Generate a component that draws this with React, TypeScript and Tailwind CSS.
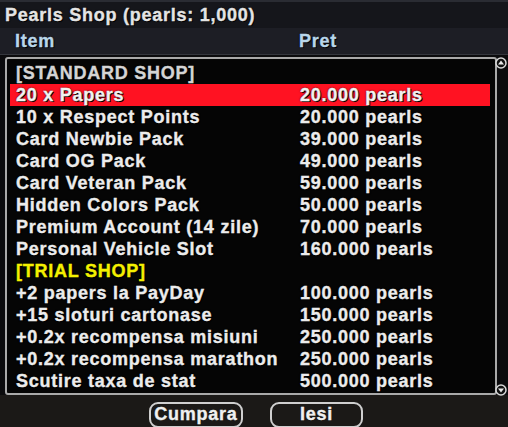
import React from "react";

type Row = { name: string; price?: string; kind?: "header" | "trial" | "selected" };

const rows: Row[] = [
  { name: "[STANDARD SHOP]", kind: "header" },
  { name: "20 x Papers", price: "20.000 pearls", kind: "selected" },
  { name: "10 x Respect Points", price: "20.000 pearls" },
  { name: "Card Newbie Pack", price: "39.000 pearls" },
  { name: "Card OG Pack", price: "49.000 pearls" },
  { name: "Card Veteran Pack", price: "59.000 pearls" },
  { name: "Hidden Colors Pack", price: "50.000 pearls" },
  { name: "Premium Account (14 zile)", price: "70.000 pearls" },
  { name: "Personal Vehicle Slot", price: "160.000 pearls" },
  { name: "[TRIAL SHOP]", kind: "trial" },
  { name: "+2 papers la PayDay", price: "100.000 pearls" },
  { name: "+15 sloturi cartonase", price: "150.000 pearls" },
  { name: "+0.2x recompensa misiuni", price: "250.000 pearls" },
  { name: "+0.2x recompensa marathon", price: "250.000 pearls" },
  { name: "Scutire taxa de stat", price: "500.000 pearls" },
];

function ScrollArrow({ down }: { down?: boolean }) {
  return (
    <svg width="12" height="12" viewBox="0 0 12 12">
      <circle cx="6" cy="6" r="5" fill="#111" stroke="#d8d8d8" strokeWidth="1.5" />
      <path d={down ? "M3 4.5 L9 4.5 L6 8.5 Z" : "M3 7.5 L9 7.5 L6 3.5 Z"} fill="#e8e8e8" />
    </svg>
  );
}

export default function App() {
  return (
    <div className="w-[508px] h-[427px] overflow-hidden bg-[#0b0b0d] font-['Liberation_Sans',Arial,sans-serif] font-bold text-[18px] tracking-[0.75px] [-webkit-text-stroke:0.35px_currentColor] [text-shadow:0_0_2px_#000,1px_1px_0_#000]">
      <div className="h-[2px] bg-[#2a2c33]" />
      <div className="h-[26px] bg-[#15161b] flex items-center px-[5px] text-[#e4e4e4]">
        Pearls Shop (pearls: 1,000)
      </div>
      <div className="h-[27px] bg-[#1d1e25] flex items-center text-[#b9d6ea] border-b border-[#34363d]">
        <span className="pl-[15px] w-[299px]">Item</span>
        <span>Pret</span>
      </div>

      <div className="relative mt-[2px] ml-[5px] w-[492px] h-[338px] bg-[#050505] border-2 border-[#a9a9a9] rounded-[3px] pt-[3px] pl-[3px]">
        <div className="flex flex-col w-[480px]">
          {rows.map((r) => (
            <div
              key={r.name}
              className={
                "h-[22px] flex items-center pl-[6px] whitespace-nowrap " +
                (r.kind === "selected" ? "bg-[#ff1222] text-[#f2f2f2]" : r.kind === "trial" ? "text-[#f4f000]" : r.kind === "header" ? "text-[#d4d4d4]" : "text-[#ececec]")
              }
            >
              <span className="w-[284px] shrink-0">{r.name}</span>
              {r.price && <span>{r.price}</span>}
            </div>
          ))}
        </div>
        <div className="absolute -right-[12px] -top-[2px]">
          <ScrollArrow />
        </div>
        <div className="absolute -right-[12px] -bottom-[3px]">
          <ScrollArrow down />
        </div>
      </div>

      <div className="h-[32px] bg-[#1b1917] flex justify-center gap-[27px] pt-[7px] pl-[4px]">
        <button className="w-[94px] h-[26px] border-2 border-[#cfcfcf] rounded-[9px] text-[#f0f0f0] font-bold leading-none pb-[2px]">
          Cumpara
        </button>
        <button className="w-[93px] h-[26px] border-2 border-[#cfcfcf] rounded-[9px] text-[#f0f0f0] font-bold leading-none pb-[2px]">
          Iesi
        </button>
      </div>
    </div>
  );
}
